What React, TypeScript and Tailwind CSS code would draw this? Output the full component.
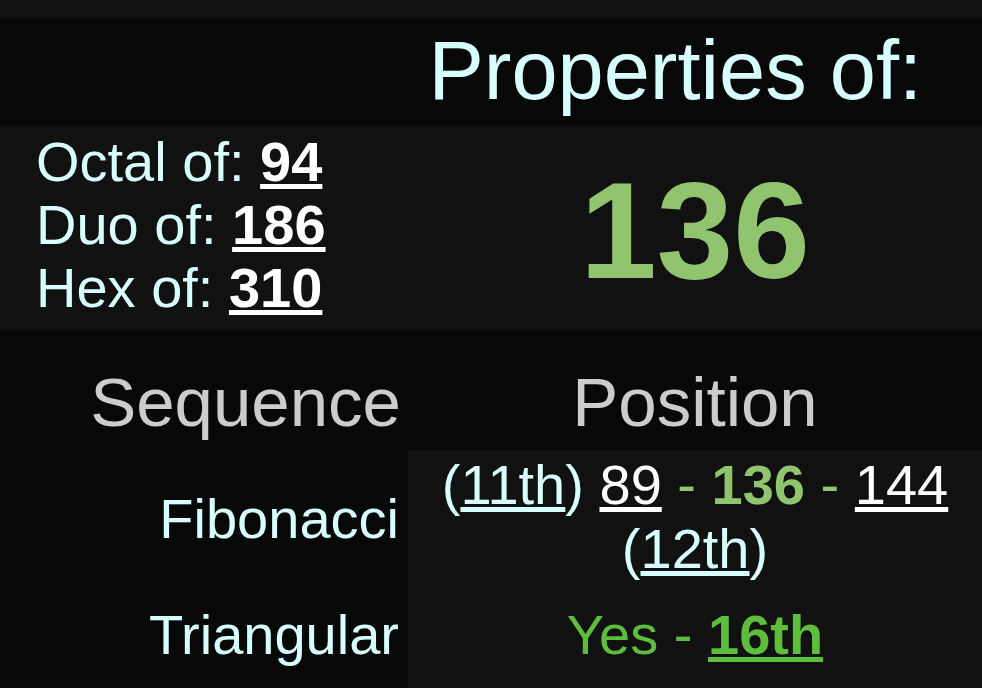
const font = { fontFamily: '"Liberation Sans", Arial, Helvetica, sans-serif' };

function Num({ children, className = "" }: { children: React.ReactNode; className?: string }) {
  return <span className={"underline " + className}>{children}</span>;
}

export default function App() {
  return (
    <div style={font} className="w-[982px] h-[688px] overflow-hidden bg-[#111111] text-[#d8ffff]">
      <div className="h-[18px] bg-[#111111]" />

      {/* header */}
      <div className="h-[108px] bg-[#080808] flex justify-end pr-[60px] pt-[5px]">
        <h1 className="text-[83px] leading-[96px] whitespace-nowrap">Properties of:</h1>
      </div>

      {/* bases + number */}
      <div className="h-[204px] bg-[#111111] flex">
        <div className="w-[408px] pl-[36px] pt-[4px] text-[56px] leading-[63px]">
          <div>
            Octal of: <Num className="font-bold text-white">94</Num>
          </div>
          <div>
            Duo of: <Num className="font-bold text-white">186</Num>
          </div>
          <div>
            Hex of: <Num className="font-bold text-white">310</Num>
          </div>
        </div>
        <div className="flex-1 flex items-center justify-center pt-[4px]">
          <span className="text-[138px] leading-[158px] font-bold text-[#90c46f]">136</span>
        </div>
      </div>

      {/* table head */}
      <div className="h-[120px] bg-[#080808] flex text-[69px] leading-[78px] text-[#cccccc] pt-[34px]">
        <div className="w-[408px] text-right pr-[7px]">Sequence</div>
        <div className="flex-1 text-center">Position</div>
      </div>

      {/* rows */}
      <div className="flex text-[56px] leading-[64px]">
        <div className="w-[408px] bg-[#080808] text-right pr-[9px] flex flex-col">
          <div className="h-[142px] flex items-center justify-end pb-[5px]">Fibonacci</div>
          <div className="h-[96px] pt-[11px]">Triangular</div>
        </div>
        <div className="flex-1 bg-[#111111] text-center">
          <div className="h-[142px] pt-[3px] px-[8px]">
            (<Num>11th</Num>) <Num className="text-white">89</Num>{" "}
            <span className="text-[#90c46f]">
              - <span className="font-bold">136</span> -
            </span>{" "}
            <Num className="text-white">144</Num> (<Num>12th</Num>)
          </div>
          <div className="h-[96px] pt-[11px] text-[#5cbe3c]">
            Yes - <Num className="font-bold">16th</Num>
          </div>
        </div>
      </div>
    </div>
  );
}
